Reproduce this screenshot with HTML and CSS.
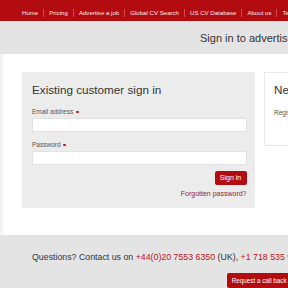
FILE: index.html
```html
<!DOCTYPE html>
<html lang="en">
<head>
<meta charset="utf-8">
<title>Sign in to advertise</title>
<link rel="stylesheet" href="styles.css">
</head>
<body>
<nav class="topnav">
  <a class="nav-item" href="#">Home</a>
  <a class="nav-item" href="#">Pricing</a>
  <a class="nav-item" href="#">Advertise a job</a>
  <a class="nav-item" href="#">Global CV Search</a>
  <a class="nav-item" href="#">US CV Database</a>
  <a class="nav-item" href="#">About us</a>
  <a class="nav-item" href="#">Testimonials</a>
</nav>
<header class="page-title">
  <h1>Sign in to advertise</h1>
</header>
<main class="content">
  <section class="card card-signin">
    <h2 class="card-title">Existing customer sign in</h2>
    <form class="form">
      <label class="label">Email address <span class="req"></span></label>
      <input class="input" type="text">
      <label class="label label-pw">Password <span class="req"></span></label>
      <input class="input" type="password">
      <div class="actions">
        <button class="btn" type="button">Sign in</button>
        <a class="forgot" href="#">Forgotten password?</a>
      </div>
    </form>
  </section>
  <section class="card card-new">
    <h2 class="card-title">New customer</h2>
    <p class="label">Register</p>
  </section>
</main>
<footer class="footer">
  <p class="contact">Questions? Contact us on <a href="#">+44(0)20 7553 6350</a> (UK), <a href="#">+1 718 535 9785</a> (US)</p>
  <div class="callback-row"><button class="btn btn-callback" type="button">Request a call back</button></div>
</footer>
</body>
</html>
```
FILE: styles.css
```css
html, body {
  margin: 0;
  padding: 0;
  overflow: hidden;
  background: #ffffff;
  font-family: "Liberation Sans", Arial, sans-serif;
  color: #333333;
}
.topnav {
  display: flex;
  align-items: center;
  box-sizing: border-box;
  height: 21px;
  padding: 4px 0 0 17px;
  background: #b30c10;
  white-space: nowrap;
}
.nav-item {
  display: block;
  height: 8px;
  line-height: 8px;
  padding: 0 5px;
  font-size: 6.1px;
  color: #f6eaea;
  text-decoration: none;
  border-left: 1px solid #cf4a4c;
}
.nav-item:first-child { border-left: none; }
.page-title {
  box-sizing: border-box;
  height: 33px;
  padding: 10.5px 0 0 200px;
  background: #e4e4e4;
  white-space: nowrap;
}
.page-title h1 {
  margin: 0;
  font-size: 11px;
  font-weight: normal;
  color: #333333;
}
.content {
  display: flex;
  align-items: flex-start;
  gap: 9px;
  padding: 18px 0 27px 19px;
  border-left: 3px solid #f3f3f3;
  white-space: nowrap;
}
.card {
  box-sizing: border-box;
  flex: 0 0 233px;
}
.card-signin {
  background: #ececec;
  padding: 10.5px 8.5px 11px 10px;
}
.card-new {
  background: #ffffff;
  border: 1px solid #e9e9e9;
  height: 74px;
  padding: 9.5px 9px 0 9px;
}
.card-title {
  margin: 0;
  font-size: 11.7px;
  font-weight: normal;
  color: #333333;
}
.form {
  display: flex;
  flex-direction: column;
}
.label {
  display: block;
  margin: 11px 0 0;
  font-size: 6.5px;
  line-height: 9px;
  color: #555555;
}
.card-new .label { margin-top: 12px; }
.label-pw { margin-top: 8px; }
.req {
  display: inline-block;
  width: 2.5px;
  height: 2.5px;
  margin-left: 1px;
  border-radius: 50%;
  background: #c8161d;
  vertical-align: 0.5px;
}
.input {
  box-sizing: border-box;
  height: 14px;
  margin: 2px 0 0;
  padding: 0;
  border: 1px solid #e2e2e2;
  background: #ffffff;
}
.actions {
  display: flex;
  flex-direction: column;
  align-items: flex-end;
  margin-top: 6px;
}
.btn {
  box-sizing: border-box;
  height: 14px;
  padding: 0 5.3px;
  border: none;
  border-radius: 2px;
  background: #b30c10;
  color: #ffffff;
  font-family: "Liberation Sans", Arial, sans-serif;
  font-size: 7px;
  line-height: 14px;
}
.forgot {
  margin-top: 5px;
  font-size: 7px;
  color: #9e2226;
  text-decoration: none;
}
.footer {
  background: #e4e4e4;
  padding: 17.5px 0 20px 32px;
  white-space: nowrap;
}
.contact {
  margin: 0;
  font-size: 8.8px;
  color: #333333;
}
.contact a {
  color: #c0141a;
  text-decoration: none;
}
.callback-row {
  display: flex;
  margin-top: 10.5px;
  padding-left: 195px;
}
.btn-callback {
  height: 15px;
  padding: 0 4.7px;
  font-size: 6.3px;
  line-height: 15px;
  flex: 0 0 auto;
}
```
